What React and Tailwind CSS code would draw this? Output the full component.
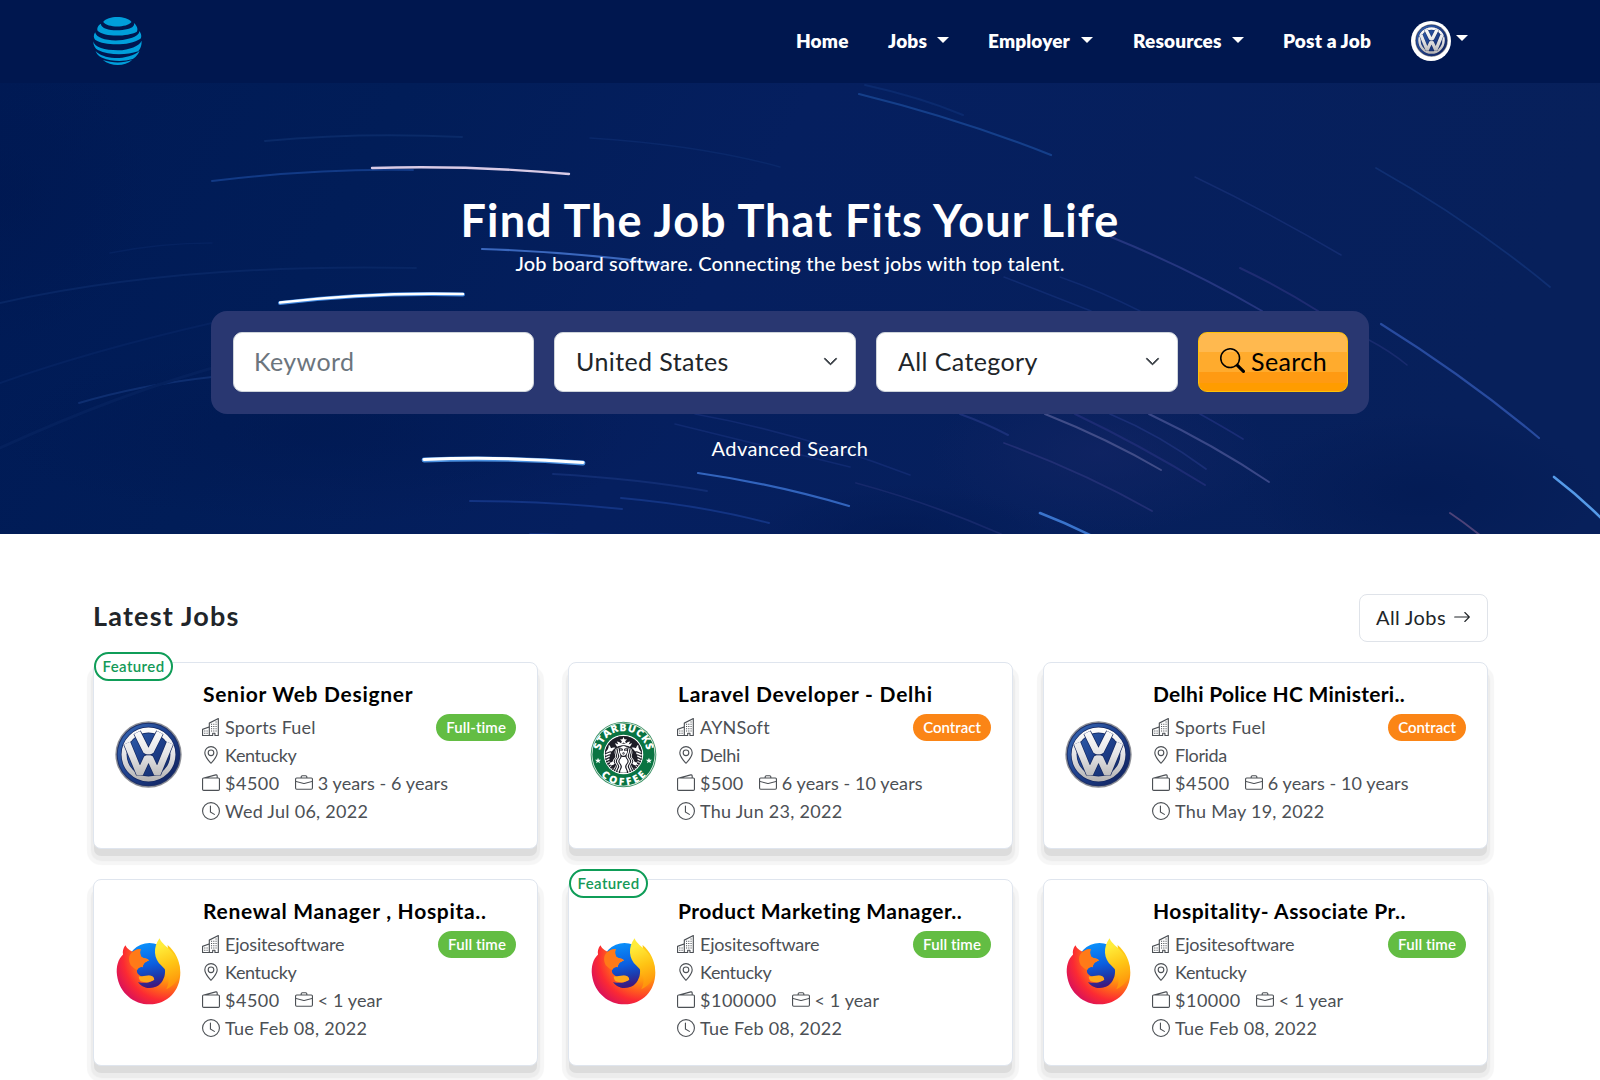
import React from "react";
import {
  BsBuildings,
  BsGeoAlt,
  BsWallet2,
  BsBriefcase,
  BsClock,
  BsSearch,
  BsArrowRight,
  BsChevronDown,
} from "react-icons/bs";
import { SiStarbucks } from "react-icons/si";

function GlobeLogo() {
  return (
    <svg viewBox="41 51 146 144" className="-mt-[2px] mr-px h-12 w-[49px] text-[#009fdb]" fill="currentColor">
      <path d="M71 66C85 46 141 46 156 66C141 84 85 84 71 66Z" />
      <path d="M64 71C55 76 51 87 55 93C75 112 145 110 172 95C177 87 171 75 163 69C166 76 160 83 145 87C115 94 66 92 64 71Z" />
      <path d="M47 97C41 106 42 115 48 120C78 138 150 138 183 116C188 108 184 98 179 93C182 105 160 115 130 120C90 125 50 116 47 97Z" />
      <path d="M41 124C42 138 47 146 55 150C90 167 140 166 176 154C186 142 187 130 186 122C180 138 150 150 115 151C75 151 45 142 41 124Z" />
      <path d="M48 153C54 166 60 170 68 173C95 184 130 186 160 177C172 168 178 160 180 152C165 167 130 175 105 174C80 172 60 166 48 153Z" />
      <path d="M70 180C95 200 135 200 158 180C130 190 100 190 70 180Z" />
    </svg>
  );
}

function VwLogo({ className }) {
  return (
    <svg viewBox="0 0 100 100" className={className}>
      <defs>
        <linearGradient id="vwBlue" x1="0" y1="0" x2="1" y2="1">
          <stop offset="0" stopColor="#3a6cb8" />
          <stop offset="0.45" stopColor="#1f4390" />
          <stop offset="1" stopColor="#101f58" />
        </linearGradient>
        <linearGradient id="vwChrome" x1="0" y1="0" x2="0" y2="100" gradientUnits="userSpaceOnUse">
          <stop offset="0.1" stopColor="#ffffff" />
          <stop offset="0.5" stopColor="#e4e4e6" />
          <stop offset="0.9" stopColor="#b4b2b2" />
        </linearGradient>
      </defs>
      <circle cx="50" cy="50" r="49.5" fill="#8d8f96" />
      <circle cx="50" cy="50" r="47.5" fill="#1c2f68" />
      <circle cx="50" cy="50" r="46" fill="url(#vwBlue)" />
      <circle cx="50" cy="50" r="36.5" fill="none" stroke="#12265f" strokeWidth="9.5" />
      <circle cx="50" cy="50" r="36.5" fill="none" stroke="url(#vwChrome)" strokeWidth="7.5" />
      <g fill="none" strokeLinejoin="bevel">
        <path d="M33 17L47 45H53L67 17M18 33L37 79L48 55H52L63 79L82 33" stroke="#12265f" strokeWidth="12" />
        <path d="M33 17L47 45H53L67 17M18 33L37 79L48 55H52L63 79L82 33" stroke="url(#vwChrome)" strokeWidth="10" />
      </g>
      <path d="M44 50.5H56" stroke="#12265f" strokeWidth="1.5" />
    </svg>
  );
}

function StarbucksLogo({ className }) {
  return (
    <svg viewBox="0 0 100 100" className={className + " overflow-visible"}>
      <defs>
        <path id="sbTop" d="M15 50A35 35 0 0 1 85 50" />
        <path id="sbBottom" d="M4 50A46 46 0 0 0 96 50" />
      </defs>
      <circle cx="50" cy="50" r="49" fill="#3f9468" />
      <circle cx="50" cy="50" r="47.5" fill="#fff" />
      <circle cx="50" cy="50" r="46.5" fill="#0a7442" />
      <circle cx="50" cy="50" r="29.5" fill="#fff" />
      <circle cx="50" cy="50" r="27.5" fill="#1d1d26" />
      <svg x="22" y="22" width="56" height="56" viewBox="0 0 24 24">
        <circle cx="12" cy="12" r="11.6" fill="#fff" />
        <SiStarbucks size={24} color="#1d1d26" />
      </svg>
      <g
        fill="#fff"
        fontFamily="'Open Sans', sans-serif"
        fontWeight="800"
        fontSize="15.5"
        textAnchor="middle"
      >
        <text>
          <textPath href="#sbTop" startOffset="50%" textLength="97">STARBUCKS</textPath>
        </text>
        <text>
          <textPath href="#sbBottom" startOffset="50%" textLength="76">COFFEE</textPath>
        </text>
      </g>
      <path
        fill="#fff"
        d="M12 55l1.2 3h3.3l-2.6 2 1 3.2-2.9-1.9-2.9 1.9 1-3.2-2.6-2h3.3zM88 55l1.2 3h3.3l-2.6 2 1 3.2-2.9-1.9-2.9 1.9 1-3.2-2.6-2h3.3z"
      />
    </svg>
  );
}

function FirefoxLogo({ className }) {
  return (
    <svg viewBox="107 235 196 200" className={className}>
      <defs>
        <linearGradient id="ffGlobe" x1="0" y1="0" x2="0.2" y2="1">
          <stop offset="0" stopColor="#0a98ff" />
          <stop offset="0.55" stopColor="#0b5fe0" />
          <stop offset="0.8" stopColor="#1c3cae" />
          <stop offset="1" stopColor="#3d1a80" />
        </linearGradient>
        <radialGradient id="ffBody" cx="262" cy="290" r="170" gradientUnits="userSpaceOnUse">
          <stop offset="0.2" stopColor="#ffc815" />
          <stop offset="0.42" stopColor="#ff980e" />
          <stop offset="0.62" stopColor="#ff5a1f" />
          <stop offset="0.78" stopColor="#fb2a33" />
          <stop offset="1" stopColor="#d8105c" />
        </radialGradient>
        <linearGradient id="ffTail" x1="0" y1="0" x2="0.2" y2="1">
          <stop offset="0.2" stopColor="#ffec3a" />
          <stop offset="0.6" stopColor="#ffc414" />
          <stop offset="1" stopColor="#ff960c" />
        </linearGradient>
      </defs>
      <circle cx="208" cy="318" r="68" fill="url(#ffGlobe)" />
      <path
        fill="url(#ffBody)"
        d="M136 257C129 266 127 276 129 284C114 298 108 320 111 346C118 400 162 433 208 433C262 433 300 392 300 338C300 305 285 275 262 256C264 280 262 290 250 300C258 330 254 350 250 356C243 374 230 384 208 384C190 384 178 374 174 366C195 372 205 368 222 360C222 350 215 347 205 348C195 352 180 352 172 340C166 327 178 320 188 322C188 312 195 306 206 302C204 295 188 297 183 290C179 282 179 276 182 268C172 268 164 272 158 276C150 272 143 270 136 257Z"
      />
      <path
        fill="#ff7a18"
        d="M182 268C172 268 164 272 158 276C146 284 144 300 152 316C158 322 166 330 172 330C176 322 182 321 188 322C188 312 195 306 206 302C204 295 188 297 183 290C179 282 179 276 182 268Z"
      />
      <path
        fill="url(#ffTail)"
        d="M238 236C244 252 262 262 274 276C292 296 300 318 299 336C294 362 282 376 258 388C270 366 268 340 244 318C220 298 218 262 238 236Z"
      />
      <path fill="#ffa81a" d="M176 350C190 350 196 346 206 347C216 347 222 352 222 359C210 368 196 370 182 364C178 360 176 356 176 350Z" />
    </svg>
  );
}

const LOGOS = {
  vw: VwLogo,
  starbucks: StarbucksLogo,
  firefox: FirefoxLogo,
};

const STREAKS = [
  { d: "M212 98Q320 85 413 87", c: "#123a86", w: 2 },
  { d: "M372 85Q470 82 569 91", c: "#d9cbe6", w: 2.4 },
  { d: "M280 220Q370 209 463 211.5", c: "#3f86de", w: 4 },
  { d: "M280 219.5Q370 209 463 211", c: "#ffffff", w: 2.4 },
  { d: "M482 166Q575 169 663 181", c: "#3a67bd", w: 2.2 },
  { d: "M424 377Q500 374 583 380", c: "#4a90e0", w: 4.8 },
  { d: "M424 376.5Q500 373 583 379.5", c: "#ffffff", w: 3 },
  { d: "M698 390Q775 401 849 423", c: "#3264bd", w: 2.2 },
  { d: "M470 418Q546 418 622 426", c: "#133483", w: 2 },
  { d: "M621 415Q700 422 769 440", c: "#133483", w: 2 },
  { d: "M553 391Q640 396 707 408", c: "#112d73", w: 2 },
  { d: "M530 451Q600 452 650 458", c: "#15378a", w: 1.6 },
  { d: "M265 58Q360 49 462 54", c: "#0a2a68", w: 2 },
  { d: "M0 220Q180 180 416 185", c: "#082664", w: 2 },
  { d: "M110 170Q160 160 212 160", c: "#052260", w: 1.5 },
  { d: "M79 320Q140 302 212 294", c: "#0e2e70", w: 2 },
  { d: "M0 300Q90 268 212 240", c: "#052260", w: 2 },
  { d: "M0 365Q120 310 230 280", c: "#05215d", w: 3 },
  { d: "M859 11Q960 36 1051 72", c: "#153f8a", w: 2.2 },
  { d: "M865 2Q920 14 963 32", c: "#0b2a6e", w: 2 },
  { d: "M590 55Q700 62 780 84", c: "#0a286a", w: 1.5 },
  { d: "M1111 154Q1190 186 1262 228", c: "#25367f", w: 2 },
  { d: "M1240 185Q1280 204 1318 228", c: "#1e2c72", w: 2 },
  { d: "M1004 194Q1050 212 1091 228", c: "#102b70", w: 1.6 },
  { d: "M1060 194Q1100 208 1140 228", c: "#102b70", w: 1.4 },
  { d: "M1195 94Q1270 130 1341 172", c: "#132c70", w: 1.6 },
  { d: "M1376 85Q1470 138 1550 204", c: "#102f72", w: 1.8 },
  { d: "M1381 241Q1466 294 1539 355", c: "#284b9f", w: 2.2 },
  { d: "M1369 257Q1390 268 1407 282", c: "#182b6e", w: 1.6 },
  { d: "M1554 394Q1580 414 1602 436", c: "#559ae8", w: 2.6 },
  { d: "M1040 430Q1066 440 1092 453", c: "#3a74cc", w: 2.6 },
  { d: "M1045 331Q1108 356 1161 387", c: "#414d88", w: 2 },
  { d: "M1075 331Q1140 362 1205 402", c: "#1d2c74", w: 2 },
  { d: "M1149 331Q1214 362 1269 399", c: "#3a4888", w: 2 },
  { d: "M1110 331Q1160 352 1206 386", c: "#1a2f76", w: 1.8 },
  { d: "M1004 360Q1085 390 1152 428", c: "#212f74", w: 1.8 },
  { d: "M960 331Q985 340 1008 352", c: "#1b3078", w: 2 },
  { d: "M856 400Q930 420 1001 451", c: "#16296b", w: 1.8 },
  { d: "M695 331Q800 350 910 392", c: "#112a70", w: 1.6 },
  { d: "M675 341Q760 362 850 384", c: "#102a70", w: 1.6 },
  { d: "M1200 331Q1225 345 1243 356", c: "#1a2d76", w: 1.8 },
  { d: "M1450 430Q1465 440 1481 453", c: "#4d4379", w: 2 },
];

function StarTrails() {
  return (
    <svg viewBox="0 0 1600 451" className="absolute inset-0 h-[451px] w-[1600px]" aria-hidden="true">
      <defs>
        <linearGradient id="sky" x1="0" y1="0" x2="1" y2="0.15">
          <stop offset="0" stopColor="#001a55" />
          <stop offset="0.25" stopColor="#011d58" />
          <stop offset="0.5" stopColor="#051f5f" />
          <stop offset="1" stopColor="#07205b" />
        </linearGradient>
        <radialGradient id="violetGlow">
          <stop offset="0" stopColor="#112463" stopOpacity="0.8" />
          <stop offset="1" stopColor="#112463" stopOpacity="0" />
        </radialGradient>
        <radialGradient id="shade">
          <stop offset="0" stopColor="#00174f" stopOpacity="0.5" />
          <stop offset="1" stopColor="#00174f" stopOpacity="0" />
        </radialGradient>
      </defs>
      <rect width="1600" height="451" fill="url(#sky)" />
      <ellipse cx="1100" cy="370" rx="170" ry="80" fill="url(#violetGlow)" />
      <ellipse cx="330" cy="350" rx="340" ry="90" fill="url(#shade)" />
      <ellipse cx="0" cy="110" rx="150" ry="150" fill="url(#shade)" />
      <ellipse cx="900" cy="451" rx="150" ry="50" fill="url(#shade)" />
      <ellipse cx="1420" cy="410" rx="180" ry="80" fill="url(#shade)" />
      <g fill="none" strokeLinecap="round">
        {STREAKS.map((s) => (
          <path key={s.d} d={s.d} stroke={s.c} strokeWidth={s.w} />
        ))}
      </g>
    </svg>
  );
}

function Caret() {
  return (
    <span className="mb-[2px] block h-0 w-0 border-x-[6px] border-t-[6px] border-x-transparent border-t-white" />
  );
}

function Header() {
  return (
    <header className="flex h-[83px] items-center bg-[#00174f] pl-[93px] font-extrabold text-white">
      <GlobeLogo />
      <nav className="-mt-[2px] ml-[653px] flex items-center text-[19px] leading-7 tracking-[0.15px] whitespace-nowrap">
        <a className="w-[92px]">Home</a>
        <a className="flex w-[100px] items-center">
          <span className="w-[49px]">Jobs</span>
          <Caret />
        </a>
        <a className="flex w-[145px] items-center">
          <span className="w-[93px]">Employer</span>
          <Caret />
        </a>
        <a className="flex w-[150px] items-center">
          <span className="w-[99px]">Resources</span>
          <Caret />
        </a>
        <a className="w-[128px]">Post a Job</a>
        <a className="flex items-center gap-[5px]">
          <span className="flex h-10 w-10 items-center justify-center rounded-full bg-white">
            <VwLogo className="h-[33px] w-[33px]" />
          </span>
          <span className="pb-1">
            <Caret />
          </span>
        </a>
      </nav>
    </header>
  );
}

function SelectBox({ children }) {
  return (
    <div className="flex h-[60px] w-[302px] items-center justify-between rounded-[9px] border border-[#ced4da] bg-white pr-[17px] pl-[21px] text-[#212529]">
      <span>{children}</span>
      <BsChevronDown size={15} strokeWidth={1} className="text-[#343a40]" />
    </div>
  );
}

function Hero() {
  return (
    <section className="relative h-[451px] overflow-hidden bg-[#021e5a]">
      <StarTrails />
      <div className="relative flex flex-col items-center pt-[108px] pr-[20px] text-white">
        <h1 className="h-[58px] text-[45px] leading-[58px] font-bold tracking-[1.1px] whitespace-nowrap">
          Find The Job That Fits Your Life
        </h1>
        <p className="h-[28px] text-[20px] leading-[28px] font-medium tracking-[0.2px] whitespace-nowrap">
          Job board software. Connecting the best jobs with top talent.
        </p>
        <div className="mt-[34px] flex h-[103px] w-[1158px] items-center gap-[20px] rounded-2xl bg-[#293771] pr-5 pb-[2px] pl-[22px] text-[25px] tracking-[0.4px]">
          <div className="flex h-[60px] w-[301px] items-center rounded-[9px] border border-[#ced4da] bg-white pl-5 text-[#6c757d]">
            Keyword
          </div>
          <SelectBox>United States</SelectBox>
          <SelectBox>All Category</SelectBox>
          <button className="flex h-[60px] w-[150px] items-center gap-[6px] rounded-[9px] border border-[#ffc107] bg-[linear-gradient(to_bottom,#ffb94f_33%,#ffab2d_33%,#ffab2d_67%,#ff9a12_67%,#ff9a12_87%,#ff9c00_87%)] pl-[21px] text-black">
            <BsSearch size={25} className="mb-[2px]" />
            <span>Search</span>
          </button>
        </div>
        <a className="mt-5 text-[20px] leading-[28px] tracking-[0.4px]">Advanced Search</a>
      </div>
    </section>
  );
}

const JOBS = [
  { title: "Senior Web Designer", company: "Sports Fuel", place: "Kentucky", pay: "$4500", exp: "3 years - 6 years", date: "Wed Jul 06, 2022", type: "Full-time", logo: "vw", tracking: "tracking-[0.7px]", featured: true },
  { title: "Laravel Developer - Delhi", company: "AYNSoft", place: "Delhi", pay: "$500", exp: "6 years - 10 years", date: "Thu Jun 23, 2022", type: "Contract", logo: "starbucks", tracking: "tracking-[0.75px]" },
  { title: "Delhi Police HC Ministeri..", company: "Sports Fuel", place: "Florida", pay: "$4500", exp: "6 years - 10 years", date: "Thu May 19, 2022", type: "Contract", logo: "vw", tracking: "tracking-[0.27px]" },
  { title: "Renewal Manager , Hospita..", company: "Ejositesoftware", place: "Kentucky", pay: "$4500", exp: "< 1 year", date: "Tue Feb 08, 2022", type: "Full time", logo: "firefox", tracking: "tracking-[0.7px]" },
  { title: "Product Marketing Manager..", company: "Ejositesoftware", place: "Kentucky", pay: "$100000", exp: "< 1 year", date: "Tue Feb 08, 2022", type: "Full time", logo: "firefox", tracking: "tracking-[0.45px]", featured: true },
  { title: "Hospitality- Associate Pr..", company: "Ejositesoftware", place: "Kentucky", pay: "$10000", exp: "< 1 year", date: "Tue Feb 08, 2022", type: "Full time", logo: "firefox", tracking: "tracking-[0.5px]" },
];

function Meta({ icon: Icon, className, children }) {
  return (
    <span className="flex items-center gap-[5px]">
      <Icon size={18} className="shrink-0" />
      <span className={className}>{children}</span>
    </span>
  );
}

function JobCard({ job }) {
  const Logo = LOGOS[job.logo];
  return (
    <article className="relative flex h-[187px] rounded-lg border border-[#dfe5ee] bg-white pr-[21px] pl-[21px] shadow-[0_8px_0_-1px_#dcdcdc,0_10px_1px_2px_#ececec,0_10px_1px_6px_#f6f6f6]">
      {job.featured && (
        <span className="absolute -top-[11px] left-0 flex h-[29px] w-[79px] items-center justify-center rounded-full border-2 border-[#0f9d58] bg-white pb-px text-[15px] font-semibold tracking-[0.4px] text-[#149a58]">
          Featured
        </span>
      )}
      <Logo className="mt-[58px] h-[67px] w-[67px] shrink-0" />
      <div className="ml-5 flex-1 pt-4 whitespace-nowrap">
        <h3 className={"h-[30px] pl-px text-[21px] leading-[30px] font-bold text-black " + job.tracking}>
          {job.title}
        </h3>
        <div className="mt-1 text-[18px] leading-7 text-[#4c5055]">
          <div className="flex h-7 items-center justify-between">
            <Meta icon={BsBuildings} className={job.company === "Ejositesoftware" ? "tracking-[-0.18px]" : "tracking-[0.2px]"}>
              {job.company}
            </Meta>
            <span
              className={
                "flex h-[27px] items-center rounded-full px-[10px] pb-px text-[15px] font-semibold text-white " +
                (job.type === "Contract" ? "bg-[#fb8516]" : "bg-[#63bd43] tracking-[0.1px]")
              }
            >
              {job.type}
            </span>
          </div>
          <Meta icon={BsGeoAlt} className="tracking-[-0.35px]">{job.place}</Meta>
          <div className="flex gap-[15px]">
            <Meta icon={BsWallet2} className="tracking-[0.5px]">{job.pay}</Meta>
            <Meta icon={BsBriefcase} className="tracking-[0.1px]">{job.exp}</Meta>
          </div>
          <Meta icon={BsClock} className="tracking-[0.27px]">{job.date}</Meta>
        </div>
      </div>
    </article>
  );
}

export default function App() {
  return (
    <div className="h-[1080px] w-[1600px] overflow-hidden bg-white font-[Lato,sans-serif]">
      <Header />
      <Hero />
      <main className="pt-[60px] pr-[112px] pl-[93px]">
        <div className="flex h-12 items-center justify-between">
          <h2 className="-mt-[4px] text-[27px] leading-10 font-bold tracking-[1.2px] text-[#212529]">Latest Jobs</h2>
          <button className="flex h-12 w-[129px] items-center gap-[7px] rounded-lg border border-[#dfe3e9] pb-[3px] pl-4 text-[20px] tracking-[0.4px] text-[#212529]">
            <span>All Jobs</span>
            <BsArrowRight size={18} />
          </button>
        </div>
        <div className="mt-5 grid grid-cols-3 gap-[30px]">
          {JOBS.map((job) => (
            <JobCard key={job.title} job={job} />
          ))}
        </div>
      </main>
    </div>
  );
}
